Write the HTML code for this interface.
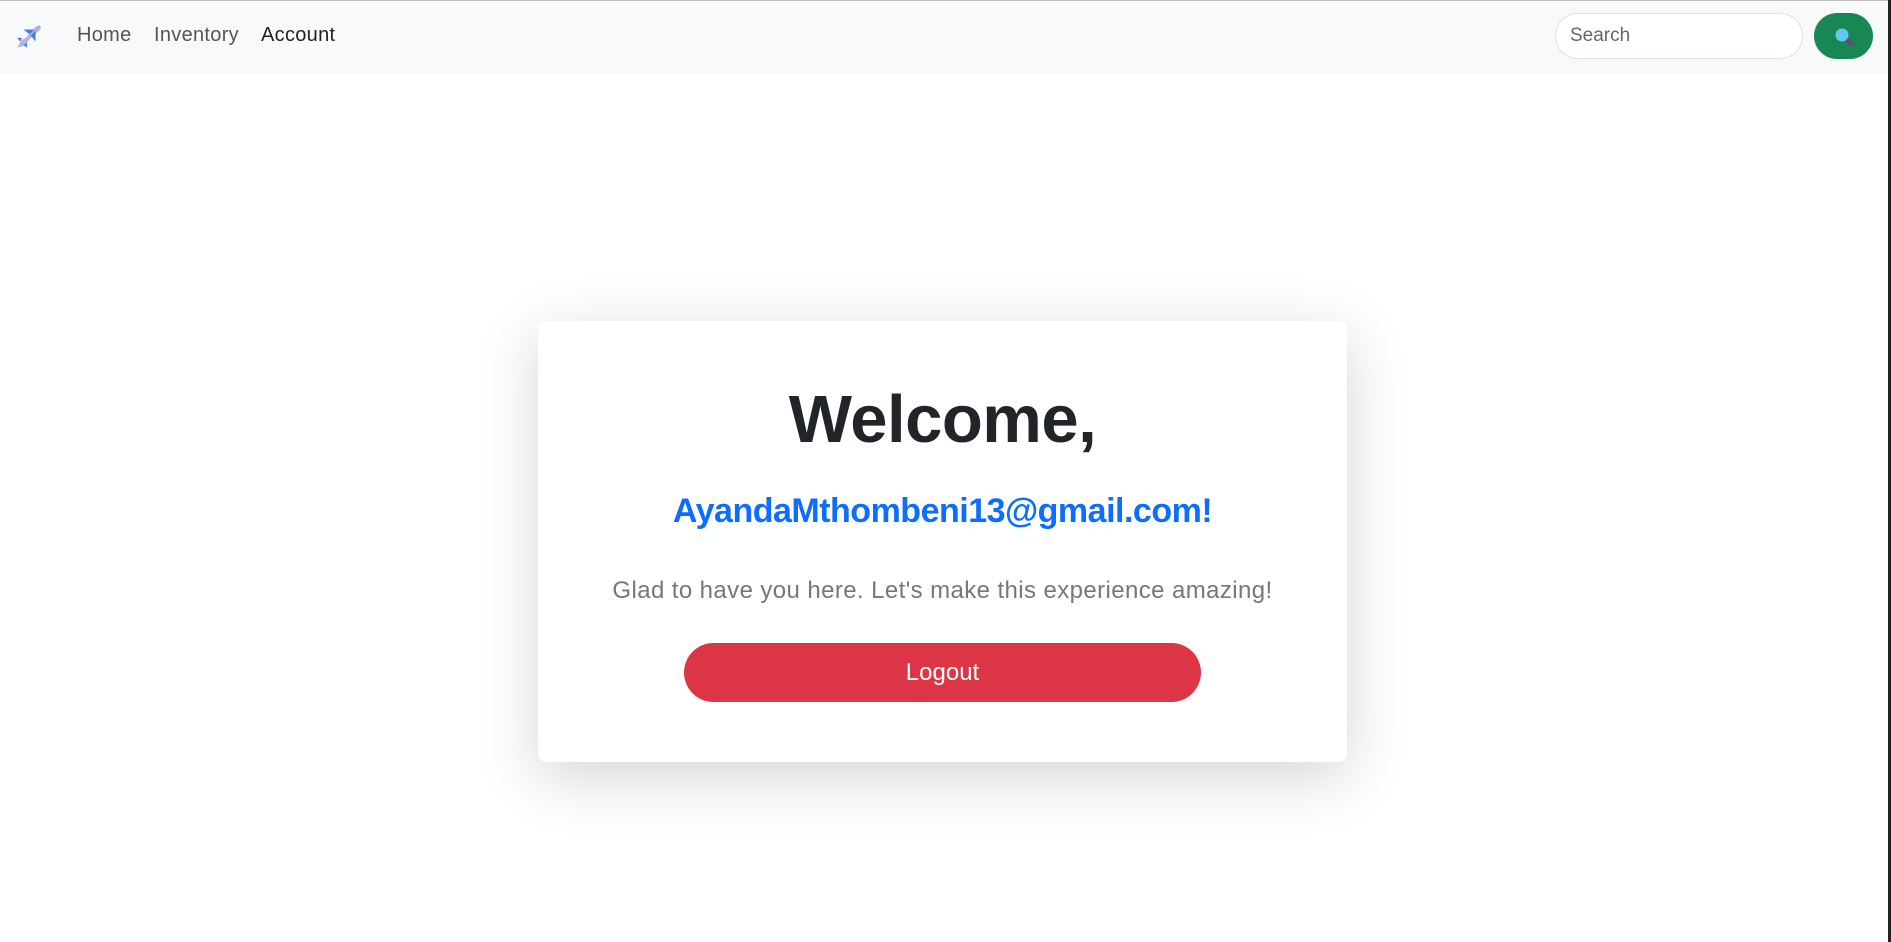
<!DOCTYPE html>
<html><head><style>
*{margin:0;padding:0;box-sizing:border-box}
html,body{width:1891px;height:942px;overflow:hidden;background:#fff;font-family:"Liberation Sans",sans-serif}
.top{position:absolute;left:0;top:0;width:1891px;height:1px;background:#bbb}
.rb{position:absolute;right:0;top:0;width:3px;height:942px;background:#222}
nav{position:absolute;left:0;top:1px;width:1888px;height:70px;background:#f8f9fa;box-shadow:0 2px 4px rgba(0,0,0,.06)}
nav a{position:absolute;top:23px;font-size:20px;color:#555;text-decoration:none;letter-spacing:0.3px}
.search{position:absolute;left:1555px;top:12px;width:248px;height:46px;border:1px solid #dee2e6;border-radius:23px;background:#fff;font-size:19px;color:#666;padding:11px 0 0 14px}
.btn{position:absolute;left:1814px;top:12px;width:59px;height:46px;border-radius:23px;background:#198754}
.card{position:absolute;left:538px;top:321px;width:809px;height:441px;background:#fff;border-radius:8px;box-shadow:0 15px 60px rgba(0,0,0,.17);text-align:center}
h1{position:absolute;top:60px;width:100%;font-size:67px;font-weight:bold;color:#212529;letter-spacing:-0.5px}
h2{position:absolute;top:171px;width:100%;font-size:34px;font-weight:bold;color:#0d6efd;letter-spacing:-0.5px}
p{position:absolute;top:256px;width:100%;font-size:24px;color:#777;letter-spacing:0.4px}
.lo{position:absolute;left:146px;top:322px;width:517px;height:59px;border-radius:30px;background:#dc3545;color:#fff;font-size:24px;line-height:59px}
</style></head><body>
<div class="top"></div>
<nav>
<svg style="position:absolute;left:15px;top:20px" width="29" height="29" viewBox="0 0 24 24"><path d="M2 22l3-6 4-2 8-9c1-1 3-2 4-1s0 3-1 4l-9 8-2 4z" fill="#b9aee0"/><path d="M7 7l9 0-4 4zM17 17l0-9-4 4z" fill="#3b82e0"/><path d="M2 14l4 0-2 3zM10 22l0-4-3 2z" fill="#3b82e0"/></svg>
<a style="left:77px">Home</a><a style="left:154px">Inventory</a><a style="left:261px;color:#222">Account</a>
<div class="search">Search</div>
<div class="btn"><svg style="position:absolute;left:19px;top:13px" width="22" height="22" viewBox="0 0 22 22"><line x1="12" y1="12" x2="18" y2="18" stroke="#7a3d8a" stroke-width="4" stroke-linecap="round"/><circle cx="9" cy="9" r="6.5" fill="#5fc8ec"/></svg></div>
</nav>
<div class="card">
<h1>Welcome,</h1>
<h2>AyandaMthombeni13@gmail.com!</h2>
<p>Glad to have you here. Let's make this experience amazing!</p>
<div class="lo">Logout</div>
</div>
<div class="rb"></div>
</body></html>
